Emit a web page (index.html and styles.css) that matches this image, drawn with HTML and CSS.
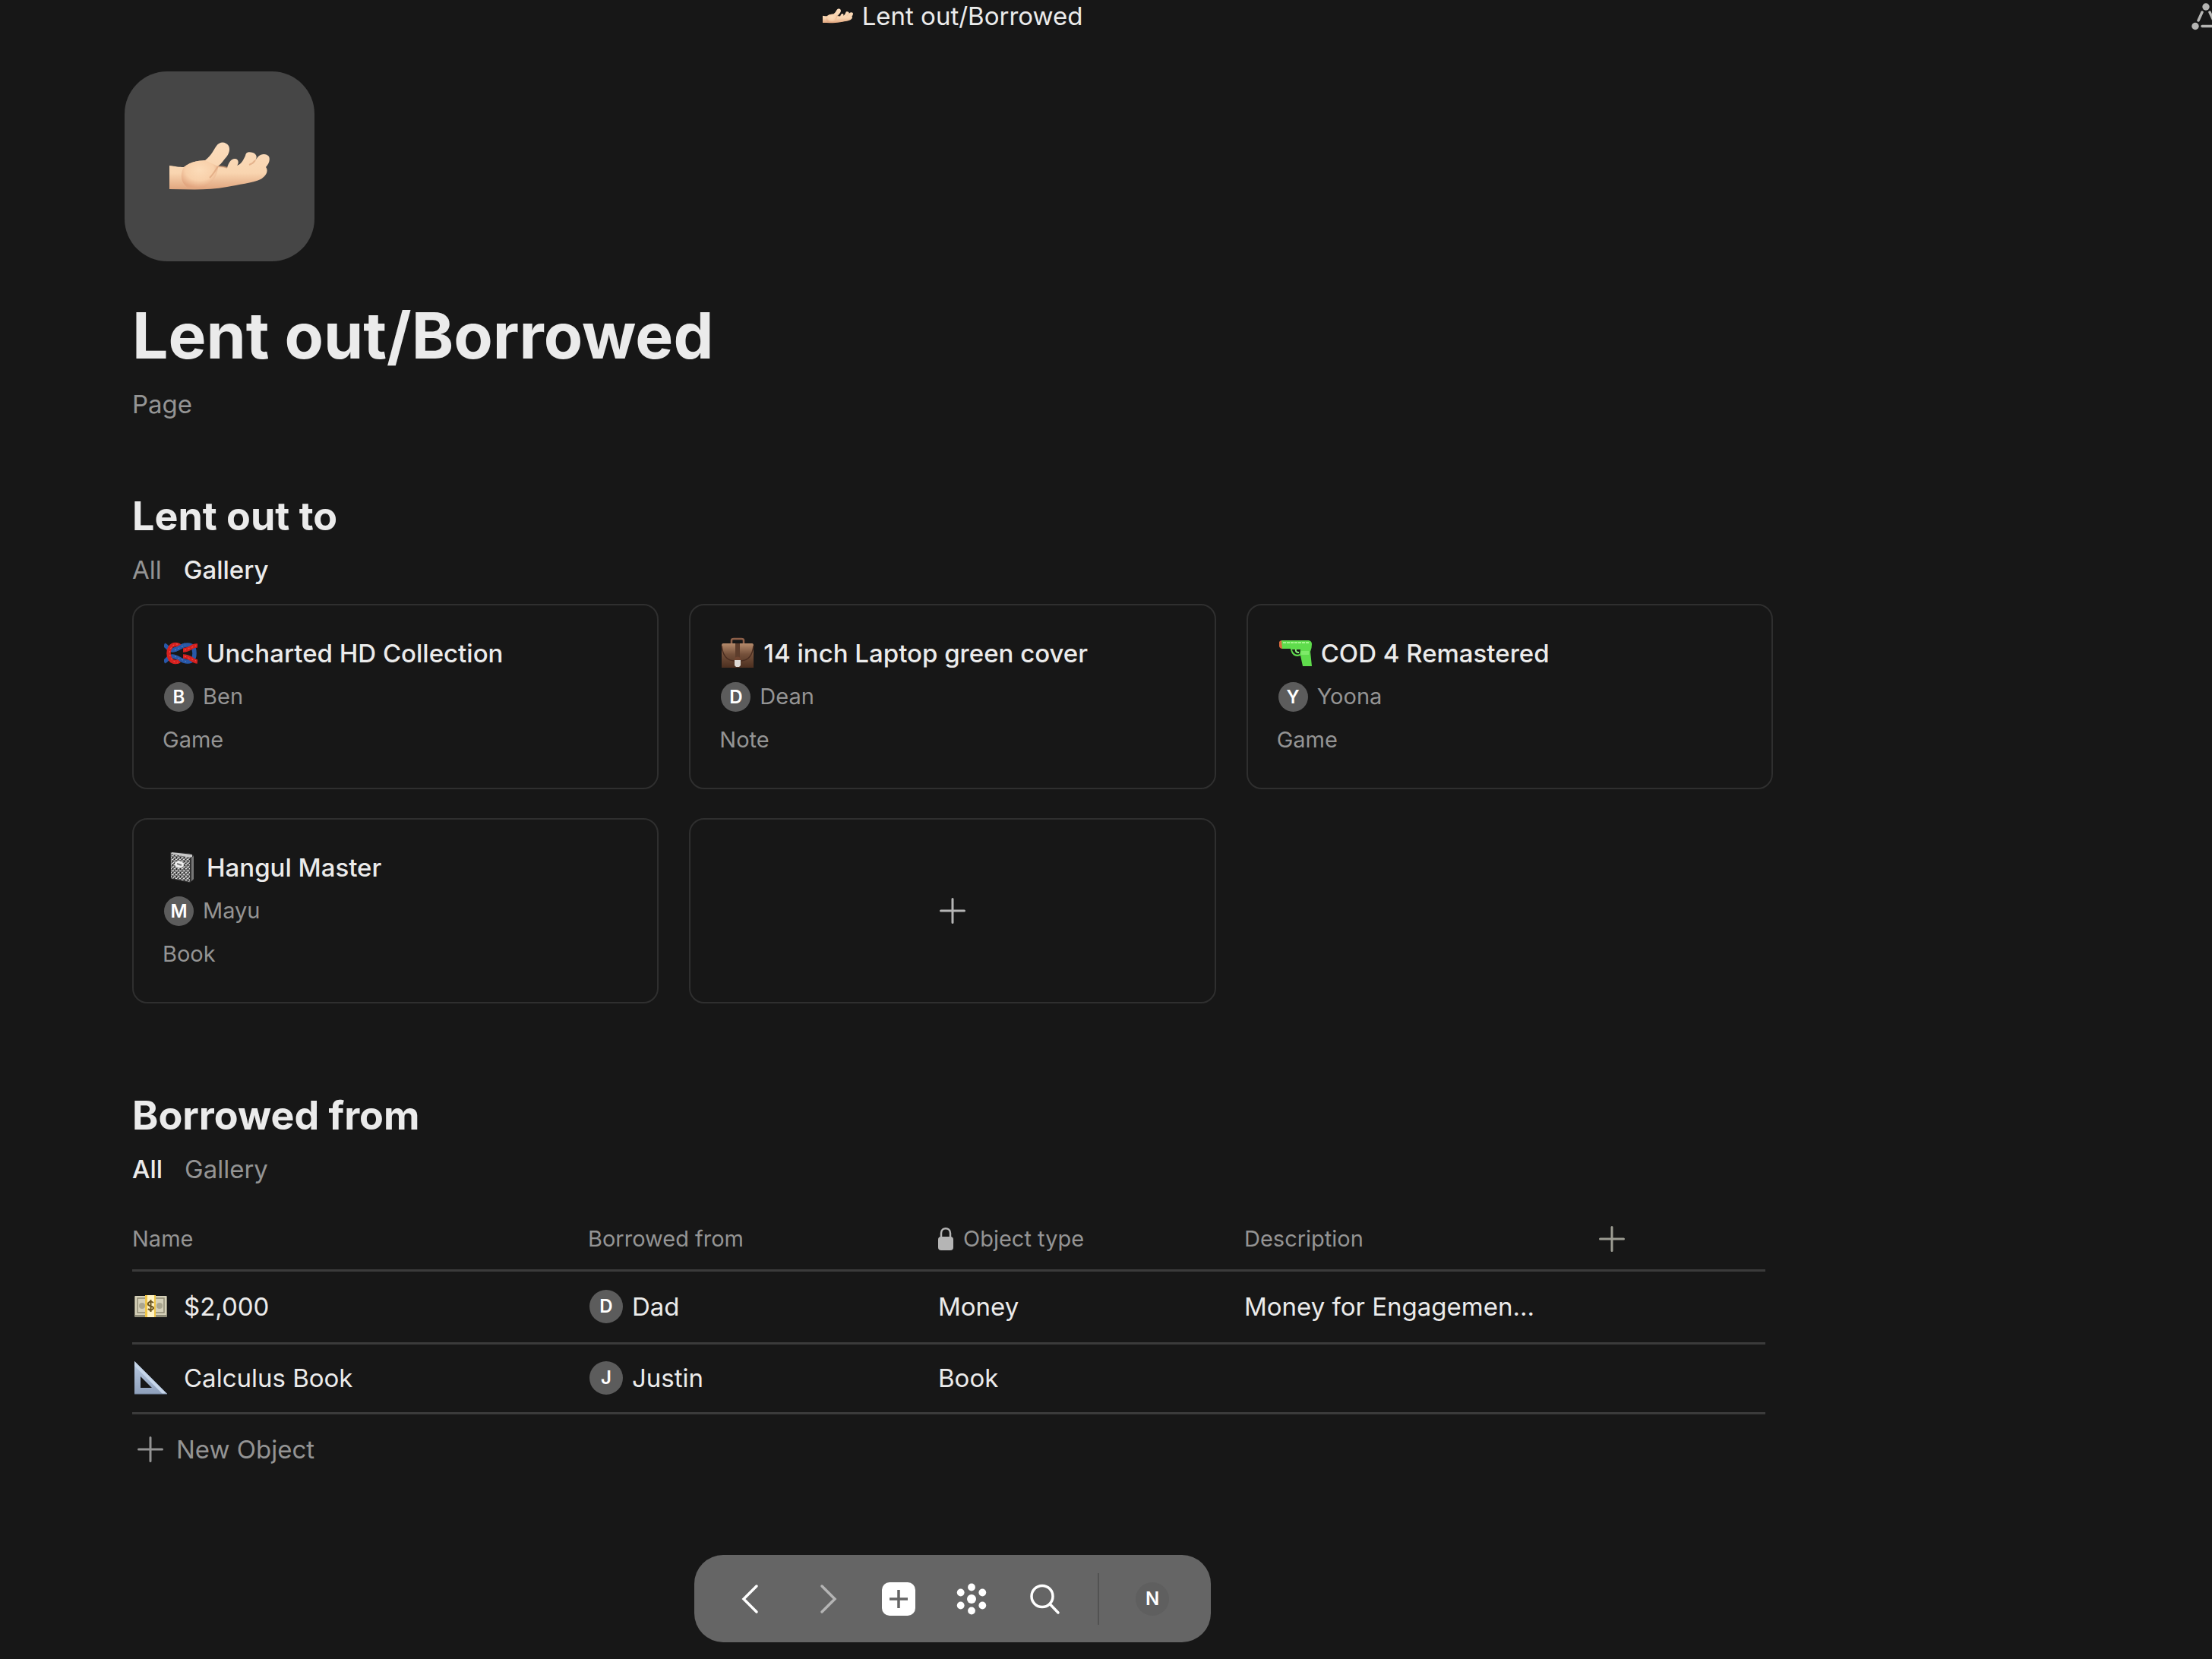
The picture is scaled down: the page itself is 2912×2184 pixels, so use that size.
FILE: index.html
```html
<!DOCTYPE html>
<html lang="en">
<head>
<meta charset="utf-8">
<meta name="viewport" content="width=device-width, initial-scale=1">
<title>Lent out/Borrowed</title>
<link rel="stylesheet" href="styles.css">
</head>
<body>
<svg class="defs" aria-hidden="true">
  <defs>
    <linearGradient id="skin" x1="0" y1="0" x2="0" y2="1">
      <stop offset="0" stop-color="#fbdcbc"/><stop offset=".65" stop-color="#f9d5b0"/><stop offset="1" stop-color="#e0a57e"/>
    </linearGradient>
    <radialGradient id="palm" cx=".5" cy=".35" r=".65">
      <stop offset="0" stop-color="#fcdcb9"/><stop offset=".6" stop-color="#f8d0aa"/><stop offset="1" stop-color="#e2a680"/>
    </radialGradient>
    <linearGradient id="leather" x1="0" y1="0" x2="0" y2="1">
      <stop offset="0" stop-color="#b58b6c"/><stop offset=".45" stop-color="#74503a"/><stop offset="1" stop-color="#4c2f20"/>
    </linearGradient>
    <linearGradient id="steel" x1="0" y1="0" x2="0" y2="1">
      <stop offset="0" stop-color="#b9cbe2"/><stop offset="1" stop-color="#8fa0bb"/>
    </linearGradient>
    <pattern id="marble" width="5" height="5" patternUnits="userSpaceOnUse">
      <rect width="5" height="5" fill="#777"/><path d="M0 1h2v1H0zM3 3h2v1H3zM2 0h1v1H2z" fill="#ddd"/><path d="M3 1h1v1H3zM1 3h1v2H1z" fill="#222"/>
    </pattern>
    <symbol id="hand" viewBox="0 0 132 64">
      <path d="M76 34C78 27 81 22 86 22C91 22 92 27 89 31C95 29 97 24 100 18C101 12 106 13 110 14C115 16 116 20 113 24L117 19C121 15 128 15 131 19C133 23 131 29 127 33C131 38 127 45 120 49C110 54 90 56 76 59C50 64 25 62 0 62V31C8 32 13 33 19 33C29 25 38 25 47 24C56 17 57 12 62 5C66-1 74-1 78 5C81 11 77 18 73 22C68 29 66 30 64 32C68 32 72 33 76 34Z" fill="url(#skin)"/>
      <path d="M19 33C29 25 38 25 47 24L64 32C64 42 58 54 45 60H24C13 52 15 40 19 33Z" fill="url(#palm)"/>
      <path d="M64 32C60 38 58 42 53 47M76 34C72 32 68 32 64 32M113 24C111 27 108 29 105 30" fill="none" stroke="#dca27b" stroke-width="2" opacity=".7"/>
    </symbol>
    <symbol id="plus" viewBox="0 0 34 34"><path d="M17 1.500V32.500M1.500 17H32.500" fill="none" stroke="currentColor" stroke-width="3" stroke-linecap="round"/></symbol>
  </defs>
</svg>

<div class="app">
  <header class="topbar">
    <div class="topbar-title"><svg class="topbar-hand" aria-hidden="true"><use href="#hand"/></svg><span>Lent out/Borrowed</span></div>
    <button class="graph-button" aria-label="Graph">
      <svg width="27" height="40" viewBox="0 0 27 40" aria-hidden="true"><g fill="#b5b5b3"><circle cx="19" cy="7" r="4.700"/><circle cx="5" cy="32.500" r="4.700"/></g><path d="M14 14L9 25M24 14L29 25M14 32.500H27" stroke="#b5b5b3" stroke-width="3.500" stroke-linecap="round"/></svg>
    </button>
  </header>

  <main class="page">
    <div class="page-icon"><svg width="132" height="64" aria-hidden="true"><use href="#hand"/></svg></div>
    <h1>Lent out/Borrowed</h1>
    <p class="page-type">Page</p>

    <section class="lent">
      <h2>Lent out to</h2>
      <nav class="tabs"><button>All</button><button class="active">Gallery</button></nav>
      <div class="gallery">
        <article class="card">
          <h3><svg class="emoji" viewBox="0 0 44 44" aria-hidden="true">
            <g fill="none">
              <path d="M0 11C5 13 5 18 11 18C18 18 22 11 31 11C37 11 40 15 40 22C40 29 37 33 31 33C22 33 18 26 11 26C5 26 5 31 0 33" stroke="#2858a8" stroke-width="5.500"/>
              <path d="M44 12C36 11 35 18 25 18M25 26C35 26 36 32 44 33" stroke="#d5211f" stroke-width="5.500"/>
              <path d="M21 13C19 11 17 10.500 15 10.500C3 10.500 3 33.500 15 33.500C17 33.500 19 33 20 32" stroke="#d5211f" stroke-width="5.500"/>
              <path d="M12 17C18 18 22 12 28 11" stroke="#2858a8" stroke-width="5.500"/>
              <path d="M14 18L28 11M14 26L29 33" stroke="#5f86cf" stroke-width="1" stroke-dasharray="2 3"/>
              <path d="M18 10C4 9 4 34 18 34M27 18L42 12M27 26L42 32" stroke="#f25a52" stroke-width="1" stroke-dasharray="2 3"/>
            </g></svg><span>Uncharted HD Collection</span></h3>
          <p class="person"><span class="avatar">B</span>Ben</p>
          <p>Game</p>
        </article>
        <article class="card">
          <h3><svg class="emoji" viewBox="0 0 44 44" aria-hidden="true">
            <path d="M14 10V5Q14 3 17 3H27Q30 3 30 5V10" fill="none" stroke="#8e6049" stroke-width="2.500"/>
            <path d="M3 9H41Q43 9 43 12V41H1V12Q1 9 3 9Z" fill="url(#leather)"/>
            <path d="M1 12Q3 31 17 32H27Q41 31 43 12" fill="none" stroke="#4a2d20" stroke-width="1.500"/>
            <path d="M19 9H25V30H19Z" fill="#5d3d2c"/><path d="M18 28Q22 25 26 28V32H18Z" fill="#6f4531"/><path d="M18 31H26V38L24 40H20L18 38Z" fill="#ddd9d4"/>
            </svg><span>14 inch Laptop green cover</span></h3>
          <p class="person"><span class="avatar">D</span>Dean</p>
          <p>Note</p>
        </article>
        <article class="card">
          <h3><svg class="emoji" viewBox="0 0 44 44" aria-hidden="true">
            <path d="M1 7Q2 5 5 5V16Q2 16 1 13Z" fill="#d96a3e"/>
            <path d="M4 5H40Q44 6 44 10Q44 15 42 20L44 39H32L29 25C22 28 17 24 16 16H5Z" fill="#5fdc4c"/>
            <path d="M18 17H29L28 23C23 25 19 22 18 17Z" fill="#171717"/><path d="M23 17Q22 21 27 21" stroke="#8bf57c" stroke-width="2" fill="none"/>
            <path d="M6 8H40" stroke="#a5f68f" stroke-width="2" stroke-dasharray="4 1"/><path d="M30 19H40V24H30Z" fill="#7eea69"/>
            </svg><span>COD 4 Remastered</span></h3>
          <p class="person"><span class="avatar">Y</span>Yoona</p>
          <p>Game</p>
        </article>
        <article class="card">
          <h3><svg class="emoji" viewBox="0 0 44 44" aria-hidden="true">
            <path d="M8 2L33 3L39 6V38L34 42L9 37Z" fill="#333"/><path d="M9 4L34 9V41L9 36Z" fill="url(#marble)"/><path d="M10 2L37 5V8L34 9L9 4Z" fill="#c8c8c8"/><path d="M36 9L39 7V37L36 40Z" fill="#777"/><ellipse cx="20" cy="18" rx="6" ry="4.500" transform="rotate(12 20 18)" fill="#eee"/><path d="M17 17L23 19" stroke="#777" stroke-width="2"/>
            </svg><span>Hangul Master</span></h3>
          <p class="person"><span class="avatar">M</span>Mayu</p>
          <p>Book</p>
        </article>
        <button class="card card-add" aria-label="New object"><svg class="plus"><use href="#plus"/></svg></button>
      </div>
    </section>

    <section class="borrowed">
      <h2>Borrowed from</h2>
      <nav class="tabs"><button class="active">All</button><button>Gallery</button></nav>
      <table>
        <colgroup><col class="col-name"><col class="col-from"><col class="col-type"><col class="col-desc"><col></colgroup>
        <thead>
          <tr><th>Name</th><th>Borrowed from</th>
            <th><span class="lock-cell"><svg width="20" height="32" viewBox="0 0 20 32" aria-hidden="true"><path d="M4 14V8.500C4 0 16 0 16 8.500V14" fill="none" stroke="#b5b5b5" stroke-width="2.500"/><rect y="13" width="20" height="18" rx="4" fill="#b5b5b5"/></svg>Object type</span></th>
            <th>Description</th><th><button class="add-column" aria-label="Add column"><svg class="plus"><use href="#plus"/></svg></button></th></tr>
        </thead>
        <tbody>
          <tr>
            <td><span class="cell name-cell"><svg class="emoji" viewBox="0 0 44 44" aria-hidden="true">
              <rect x="1" y="8" width="43" height="28" rx="1" fill="#8f8c78"/><rect x="2" y="8" width="41" height="25" fill="#d5d0b8"/><rect x="5" y="11" width="35" height="19" fill="none" stroke="#8e8a74" stroke-width="1.500"/><circle cx="11" cy="21" r="4" fill="#aaa68f"/><circle cx="34" cy="21" r="4" fill="#aaa68f"/><rect x="15" y="7" width="14" height="29" fill="#f0c648"/><rect x="18" y="7" width="9" height="29" fill="#fff3c5"/><path d="M26 17Q22 14 19.500 17T22.500 21.500T25 25.500T19 25M22.500 13V29" fill="none" stroke="#6b5520" stroke-width="2"/>
              </svg>$2,000</span></td>
            <td><span class="cell"><span class="avatar avatar-lg">D</span>Dad</span></td><td>Money</td><td>Money for Engagemen...</td><td></td>
          </tr>
          <tr>
            <td><span class="cell name-cell"><svg class="emoji" viewBox="0 0 44 44" aria-hidden="true"><path d="M1 0L44 43H1ZM9 20V35H24Z" fill="url(#steel)" fill-rule="evenodd"/><path d="M1 0L44 43H38L1 6Z" fill="#c6d6ea"/><path d="M1 43H44" stroke="#74849d" stroke-width="1"/></svg>Calculus Book</span></td>
            <td><span class="cell"><span class="avatar avatar-lg">J</span>Justin</span></td><td>Book</td><td></td><td></td>
          </tr>
        </tbody>
      </table>
      <button class="new-object"><svg class="plus"><use href="#plus"/></svg>New Object</button>
    </section>
  </main>

  <footer class="dock">
    <nav class="toolbar">
      <button aria-label="Back"><svg viewBox="0 0 44 44"><path d="M27 5L10 22L27 39" fill="none" stroke="#fff" stroke-width="3.500" stroke-linecap="round"/></svg></button>
      <button aria-label="Forward" disabled><svg viewBox="0 0 44 44"><path d="M17 5L34 22L17 39" fill="none" stroke="#b4b4b4" stroke-width="3.500" stroke-linecap="round"/></svg></button>
      <button aria-label="Create"><svg viewBox="0 0 44 44"><rect width="44" height="44" rx="10" fill="#fff"/><path d="M22 10V34M10 22H34" stroke="#656565" stroke-width="3.500"/></svg></button>
      <button aria-label="Apps"><svg viewBox="0 0 44 44"><g fill="#fff"><circle cx="22" cy="22" r="6"/><circle cx="22" cy="6.500" r="4.900"/><circle cx="22" cy="37.500" r="4.900"/><circle cx="7.700" cy="13.500" r="4.900"/><circle cx="36.300" cy="13.500" r="4.900"/><circle cx="7.700" cy="30.500" r="4.900"/><circle cx="36.300" cy="30.500" r="4.900"/></g></svg></button>
      <button aria-label="Search"><svg viewBox="0 0 44 44"><circle cx="19" cy="18.500" r="14" fill="none" stroke="#fff" stroke-width="3.500"/><path d="M29 28.500L40 40" stroke="#fff" stroke-width="3.500" stroke-linecap="round"/></svg></button>
      <div class="toolbar-profile"><button class="avatar avatar-lg profile">N</button></div>
    </nav>
  </footer>
</div>
</body>
</html>
```
FILE: styles.css
```css
* { box-sizing: border-box; }

body {
  margin: 0;
  background: #171717;
  color: #ebebeb;
  font-family: Inter, "Liberation Sans", sans-serif;
  font-size: 33px;
  line-height: 44px;
}

h1, h2, h3, p { margin: 0; }

button {
  padding: 0;
  border: 0;
  background: none;
  color: inherit;
  font: inherit;
}

svg { display: block; flex: none; }

.defs { position: absolute; width: 0; height: 0; }

.app {
  display: flex;
  flex-direction: column;
  min-height: 100vh;
}

.topbar {
  display: flex;
  justify-content: space-between;
  height: 44px;
}

.topbar-title {
  display: flex;
  flex: 1;
  justify-content: center;
  gap: 12px;
  max-width: 2508px;
}

.topbar-hand { width: 40px; height: 20px; margin-top: 11px; }
.topbar-title span { line-height: 42px; }

.page {
  max-width: 2508px;
  padding: 50px 174px 0;
}

.page-icon {
  display: flex;
  align-items: center;
  justify-content: center;
  width: 250px;
  height: 250px;
  margin-left: -10px;
  border-radius: 56px;
  background: #464646;
}

h1 {
  margin-top: 46px;
  font-size: 84px;
  font-weight: 700;
  line-height: 104px;
}

.page-type {
  margin-top: 16px;
  color: #949494;
}

.lent { margin-top: 94px; }

h2 {
  font-size: 52px;
  font-weight: 700;
  line-height: 64px;
}

.tabs {
  display: flex;
  gap: 29px;
  margin-top: 16px;
  color: #949494;
}

.tabs .active { color: #ebebeb; font-weight: 500; }

.gallery {
  display: grid;
  grid-template-columns: repeat(3, 1fr);
  gap: 38px 40px;
  margin-top: 23px;
}

.card {
  min-height: 244px;
  padding: 41px 38px 0;
  border: 2px solid #2f2f2f;
  border-radius: 20px;
  color: #949494;
  font-size: 29px;
}

.card h3 {
  display: flex;
  align-items: center;
  gap: 12px;
  padding-left: 2px;
  color: #ebebeb;
  font-size: 33px;
  font-weight: 500;
}

.card p { margin-top: 13px; }

.person, .cell {
  display: flex;
  align-items: center;
  gap: 12px;
  padding-left: 2px;
}

.card-add {
  display: flex;
  align-items: center;
  justify-content: center;
  padding: 0;
  color: #b5b5b5;
}

.emoji { width: 44px; height: 44px; }
.plus { width: 34px; height: 34px; }

.avatar {
  flex: none;
  width: 39px;
  height: 39px;
  border-radius: 50%;
  background: #5c5c5c;
  color: #fff;
  font-size: 24px;
  font-weight: 600;
  line-height: 39px;
  text-align: center;
}

.avatar-lg { width: 44px; height: 44px; line-height: 44px; }

.borrowed { margin-top: 116px; }

table {
  width: calc(100% - 10px);
  margin-top: 37px;
  border-collapse: collapse;
  table-layout: fixed;
}

th, td {
  height: 96px;
  padding: 0;
  border-bottom: 3px solid #3b3b3b;
  text-align: left;
  white-space: nowrap;
}

tr:last-child td { height: 92px; }

thead th {
  height: 74px;
  padding-bottom: 6px;
  color: #949494;
  font-size: 29px;
  font-weight: 400;
}

.col-name { width: 600px; }
.col-from { width: 461px; }
.col-type { width: 403px; }
.col-desc { width: 467px; }

.name-cell { gap: 22px; }

.lock-cell {
  display: flex;
  align-items: center;
  gap: 13px;
}

.add-column { display: block; color: #9c9c92; }

.new-object {
  display: flex;
  align-items: center;
  gap: 17px;
  margin: 24px 0 0 7px;
  color: #949494;
}

.dock {
  display: flex;
  justify-content: center;
  max-width: 2508px;
  margin-top: auto;
  padding-bottom: 22px;
}

.toolbar {
  display: flex;
  align-items: center;
  gap: 52px;
  height: 115px;
  padding: 0 55px;
  border-radius: 38px;
  background: #656565;
}

.toolbar svg { width: 44px; height: 44px; }

.toolbar-profile {
  display: flex;
  align-items: center;
  height: 68px;
  margin-left: -4px;
  padding-left: 48px;
  border-left: 2px solid #525252;
}

.profile { background: #5f5f5f; }
```
